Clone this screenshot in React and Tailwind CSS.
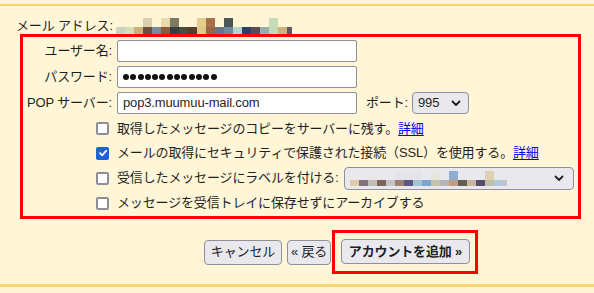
import React from "react";

const emailTop = [null, null, null, "#dccfae", null, "#ebd9ae", "#7f7a66", null, null, "#e5cd8a", "#a6704a", null, "#4a565a", null, null, null, null, "#c7dbb8", null, null];
const emailBottom = ["#c9d3c0", "#d7dcb8", "#cfae7a", "#6f4f3c", "#7b8a98", "#8a5a3a", "#37403f", "#4b4b40", "#5b3a26", "#e2c98a", "#9b6640", "#6b7386", "#6c8a9a", "#b2d4cc", "#2f3f63", "#5d4a55", "#97aeb3", "#c5dbb6", "#d2b17a", "#6a5560"];

const labelTop = [null, null, null, null, null, "#e4e4ea", "#e4e4ea", "#e4e4ea", null, "#e7e6dc", null, "#8fadd0", null, null, null, "#dcd1b1", null, null];
const labelBottom = ["#dccca8", "#85727a", "#c0bdb6", "#7f665d", "#c4c3c4", "#9e8174", "#565a80", "#a6c3d4", "#7ca5cc", "#c3c4ac", "#b7b6b6", "#c09e86", "#605f55", "#c7b5a2", "#574e6e", "#bfc0a9", "#b4c8dc", "#c6c4c8"];

// ぼかし部分（モザイク）
const Mosaic = ({ top, bottom, topH, bottomH, last }) => (
  <div className="flex flex-col">
    <div className="flex">
      {top.map((c, i) => (
        <span
          key={i}
          className={i === top.length - 1 ? `${last} block` : "w-[9px] block"}
          style={{ height: topH, background: c || "transparent" }}
        />
      ))}
    </div>
    <div className="flex">
      {bottom.map((c, i) => (
        <span
          key={i}
          className={i === bottom.length - 1 ? `${last} block` : "w-[9px] block"}
          style={{ height: bottomH, background: c }}
        />
      ))}
    </div>
  </div>
);

const Chevron = () => (
  <svg width="10" height="7" viewBox="0 0 10 7" fill="none">
    <path d="M1.5 1.5 5 5l3.5-3.5" stroke="#1f1f1f" strokeWidth="1.8" strokeLinecap="round" strokeLinejoin="round" />
  </svg>
);

const Checkbox = ({ checked }) =>
  checked ? (
    <span className="w-[13px] h-[13px] rounded-[2px] bg-[#1a62d6] flex items-center justify-center shrink-0">
      <svg width="10" height="10" viewBox="0 0 10 10" fill="none">
        <path d="M2 5.2 4.1 7.3 8.2 2.8" stroke="white" strokeWidth="1.8" strokeLinecap="round" strokeLinejoin="round" />
      </svg>
    </span>
  ) : (
    <span className="w-[13px] h-[13px] rounded-[2px] border-2 border-[#8e8e98] bg-white shrink-0" />
  );

const Link = ({ children }) => (
  <span className="text-[#0000ee] underline underline-offset-2">{children}</span>
);

const Label = ({ children }) => (
  <div className="w-[89px] text-right whitespace-nowrap">{children}</div>
);

const Input = ({ children }) => (
  <div className="ml-[5px] w-[240px] h-[22px] bg-white border border-[#8f8f9d] rounded-[2px] flex items-center pl-[5px]">
    {children}
  </div>
);

const CheckRow = ({ h, checked, children }) => (
  <div className={`${h} flex items-center pl-[73px]`}>
    <Checkbox checked={checked} />
    <div className="ml-[8px] flex items-center whitespace-nowrap">{children}</div>
  </div>
);

const Button = ({ w, bold, children }) => (
  <div
    className={`${w} h-[25px] bg-[#e9e9ed] border border-[#8f8f9d] rounded-[4px] flex items-center justify-center whitespace-nowrap ${bold ? "font-bold" : ""}`}
  >
    {children}
  </div>
);

export default function App() {
  return (
    <div
      className="w-[594px] h-[293px] bg-[#fff5d7] text-[#1f1f1f] text-[13px] leading-[16px] tracking-[-0.15px] overflow-hidden"
      style={{ fontFamily: '"Liberation Sans", "Noto Sans CJK JP", sans-serif' }}
    >
      <div className="pt-[4px]">
        <div className="h-[2px] bg-[#f7d56e]" />
      </div>

      {/* メールアドレス */}
      <div className="h-[28px] flex items-start">
        <div className="w-[112px] pt-[12px] pl-[16px] whitespace-nowrap">メール アドレス:</div>
        <div className="ml-[4px] pt-[12px]">
          <Mosaic top={emailTop} bottom={emailBottom} topH={9} bottomH={7} last="w-[5px]" />
        </div>
      </div>

      {/* 設定ボックス */}
      <div className="ml-[20px] w-[561px] h-[185px] border-[3px] border-[#ff0000] pt-[1px]">
        <div className="h-[26px] flex items-center">
          <Label>ユーザー名:</Label>
          <Input />
        </div>
        <div className="h-[26px] flex items-center">
          <Label>パスワード:</Label>
          <Input>
            <div className="flex gap-[1.3px]">
              {Array.from({ length: 13 }).map((_, i) => (
                <span key={i} className="w-[6px] h-[6px] rounded-full bg-[#111]" />
              ))}
            </div>
          </Input>
        </div>
        <div className="h-[26px] flex items-center">
          <Label>POP サーバー:</Label>
          <Input>pop3.muumuu-mail.com</Input>
          <div className="ml-[9px] whitespace-nowrap">ポート:</div>
          <div className="ml-[4px] w-[57px] h-[22px] bg-[#e9e9ed] border border-[#8f8f9d] rounded-[4px] flex items-center justify-between pl-[5px] pr-[7px]">
            <span>995</span>
            <Chevron />
          </div>
        </div>

        <CheckRow h="h-[25px]">
          取得したメッセージのコピーをサーバーに残す。<Link>詳細</Link>
        </CheckRow>
        <CheckRow h="h-[24px]" checked>
          メールの取得にセキュリティで保護された接続（SSL）を使用する。<Link>詳細</Link>
        </CheckRow>
        <CheckRow h="h-[26px]">
          受信したメッセージにラベルを付ける:
          <div className="ml-[5px] w-[230px] h-[23px] bg-[#e9e9ed] border border-[#8f8f9d] rounded-[4px] flex items-center justify-between pl-[5px] pr-[9px]">
            <div className="pt-[1px]">
              <Mosaic top={labelTop} bottom={labelBottom} topH={9} bottomH={6} last="w-[4px]" />
            </div>
            <Chevron />
          </div>
        </CheckRow>
        <CheckRow h="h-[24px]">メッセージを受信トレイに保存せずにアーカイブする</CheckRow>
      </div>

      {/* ボタン */}
      <div className="mt-[11px] pl-[204px] flex items-center">
        <Button w="w-[78px]">キャンセル</Button>
        <div className="ml-[5px]">
          <Button w="w-[44px]">« 戻る</Button>
        </div>
        <div className="ml-[1px] w-[146px] h-[44px] border-[3px] border-[#ff0000] pl-[6px] pt-[6px]">
          <Button w="w-[129px]" bold>
            アカウントを追加 »
          </Button>
        </div>
      </div>

      <div className="mt-[10px] h-[3px] bg-[#f7d56e]" />
    </div>
  );
}
